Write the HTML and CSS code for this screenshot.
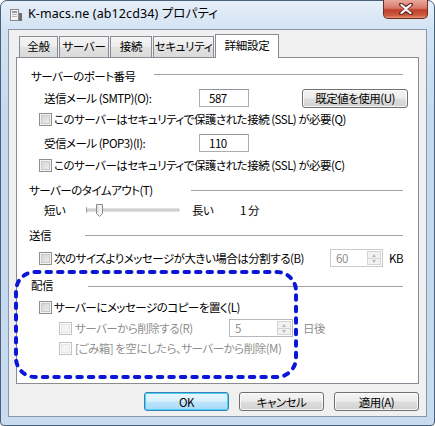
FILE: index.html
```html
<!DOCTYPE html>
<html lang="ja">
<head>
<meta charset="utf-8">
<link rel="stylesheet" href="styles.css">
</head>
<body>
<div class="window">
  <div class="titlebar">
    <svg class="app-icon" width="13" height="14" viewBox="0 0 13 14">
      <rect x="0.5" y="1.5" width="8" height="11" fill="#f4f4f4" stroke="#8a8a8a"/>
      <rect x="2" y="3" width="5" height="2" fill="#9a9a9a"/>
      <rect x="2" y="6" width="5" height="1" fill="#b5b5b5"/>
      <rect x="2" y="8" width="5" height="1" fill="#b5b5b5"/>
      <rect x="9" y="5" width="3" height="8" fill="#6f6f6f"/>
    </svg>
    <span class="title">K-macs.ne (ab12cd34) プロパティ</span>
    <div class="close">
      <svg width="16" height="12" viewBox="0 0 16 12">
        <path d="M3 1.5 L8 5 L13 1.5 M3 10.5 L8 7 L13 10.5" fill="none" stroke="#6b2a24" stroke-width="4" stroke-linecap="round"/>
        <path d="M3.5 2 L8 5.5 L12.5 2 M3.5 10 L8 6.5 L12.5 10" fill="none" stroke="#ffffff" stroke-width="2.2" stroke-linecap="round"/>
      </svg>
    </div>
  </div>
  <div class="client">
    <div class="tabs">
      <div class="tab tab-general">全般</div>
      <div class="tab tab-server">サーバー</div>
      <div class="tab tab-conn">接続</div>
      <div class="tab tab-sec">セキュリティ</div>
      <div class="tab tab-active">詳細設定</div>
    </div>
    <div class="panel">
      <div class="group-head head-port"><span>サーバーのポート番号</span><i class="rule"></i></div>

      <div class="row row-field mt5">
        <span class="field-label">送信メール (SMTP)(O):</span>
        <span class="textbox">587</span>
        <span class="btn btn-default-val">既定値を使用(U)</span>
      </div>

      <div class="row row-check mt4">
        <span class="check"></span><span>このサーバーはセキュリティで保護された接続 (SSL) が必要(Q)</span>
      </div>

      <div class="row row-field mt7">
        <span class="field-label">受信メール (POP3)(I):</span>
        <span class="textbox">110</span>
      </div>

      <div class="row row-check mt5">
        <span class="check"></span><span>このサーバーはセキュリティで保護された接続 (SSL) が必要(C)</span>
      </div>

      <div class="group-head head-timeout mt9"><span>サーバーのタイムアウト(T)</span><i class="rule"></i></div>

      <div class="row row-slider mt3">
        <span class="slider-short">短い</span>
        <svg class="slider" width="94" height="18" viewBox="0 0 94 18">
          <line x1="0.5" y1="6" x2="0.5" y2="12" stroke="#a8a8a8"/>
          <rect x="1" y="8" width="92" height="2" fill="#e4e4e4" stroke="#b2b2b2" stroke-width="0.8"/>
          <path d="M10.5 3.5 h6 v9 l-3 3 l-3 -3 z" fill="#f4f4f4" stroke="#8a8a8a"/>
          <line x1="12" y1="5" x2="12" y2="12" stroke="#d0d0d0"/>
        </svg>
        <span class="slider-long">長い</span>
        <span>1 分</span>
      </div>

      <div class="group-head head-send mt8"><span>送信</span><i class="rule"></i></div>

      <div class="row row-field mt6">
        <span class="check"></span><span class="split-label">次のサイズよりメッセージが大きい場合は分割する(B)</span>
        <span class="spin spin-split"><span class="spin-val">60</span><span class="spin-btns"><i class="up"></i><i class="down"></i></span></span>
        <span class="unit">KB</span>
      </div>

      <div class="group-head head-deliver mt10"><span>配信</span><i class="rule"></i></div>

      <div class="row row-check mt6">
        <span class="check"></span><span>サーバーにメッセージのコピーを置く(L)</span>
      </div>

      <div class="row row-field sub mt4 disabled-text">
        <span class="check check-disabled"></span><span class="delete-label">サーバーから削除する(R)</span>
        <span class="spin spin-days"><span class="spin-val">5</span><span class="spin-btns"><i class="up"></i><i class="down"></i></span></span>
        <span class="unit-days">日後</span>
      </div>

      <div class="row row-check sub mt3 disabled-text">
        <span class="check check-disabled"></span><span>[ごみ箱] を空にしたら、サーバーから削除(M)</span>
      </div>

      <svg class="annotation" width="286" height="112" viewBox="0 0 286 112">
        <rect x="3" y="3" width="280" height="105" rx="19" ry="19" fill="none" stroke="#0b16d6" stroke-width="4" stroke-dasharray="4.5 7" stroke-linecap="round"/>
      </svg>
    </div>
    <div class="buttons">
      <span class="btn btn-ok">OK</span>
      <span class="btn">キャンセル</span>
      <span class="btn">適用(A)</span>
    </div>
  </div>
</div>
</body>
</html>
```

FILE: styles.css
```css
html, body {
  margin: 0;
  padding: 0;
  background: #ffffff;
}

body {
  width: 435px;
  height: 426px;
  overflow: hidden;
  font-family: "Noto Sans CJK JP", "Noto Sans", sans-serif;
  font-size: 11.5px;
  letter-spacing: -0.5px;
  line-height: 16px;
  color: #000;
  font-feature-settings: "palt";
  white-space: nowrap;
}

.window {
  box-sizing: border-box;
  width: 435px;
  height: 426px;
  border: 1px solid #4a5f78;
  border-radius: 7px 7px 4px 4px;
  background: linear-gradient(180deg, #e6eff9 0px, #d3e3f3 28px, #c4d8ee 120px, #c8dbef 100%);
  padding: 0 7px 8px 7px;
  display: flex;
  flex-direction: column;
}

.titlebar {
  height: 28px;
  display: flex;
  align-items: flex-start;
  flex-shrink: 0;
}

.app-icon {
  margin: 7px 0 0 2px;
}

.title {
  margin: 5px 0 0 5px;
  font-family: "Noto Sans", "Noto Sans CJK JP", sans-serif;
  font-size: 12.5px;
  letter-spacing: 0.1px;
  color: #000;
}

.close {
  margin-left: auto;
  margin-right: -1px;
  margin-top: -1px;
  width: 45px;
  height: 19px;
  box-sizing: border-box;
  border: 1px solid #6e2b22;
  border-top: none;
  border-radius: 0 0 5px 5px;
  background: linear-gradient(180deg, #e9a99c 0%, #d7796a 45%, #c23f2b 55%, #cc5a3e 85%, #e59a73 100%);
  display: flex;
  align-items: center;
  justify-content: center;
}

.client {
  flex: 1;
  border: 1px solid #8498b0;
  background: #f0f0f0;
  padding: 0 7px;
  display: flex;
  flex-direction: column;
}

.tabs {
  display: flex;
  align-items: flex-end;
  height: 27px;
  margin-left: 3px;
  position: relative;
  z-index: 1;
}

.tab {
  box-sizing: border-box;
  height: 21px;
  margin-right: 1px;
  border: 1px solid #898c95;
  border-bottom: none;
  background: linear-gradient(180deg, #f5f5f5 0%, #ececec 50%, #e2e2e2 51%, #dadada 100%);
  line-height: 19px;
  font-size: 11.5px;
  letter-spacing: -0.3px;
  text-align: center;
}

.tab-general { width: 39px; }
.tab-server { width: 50px; }
.tab-conn { width: 42px; }
.tab-sec { width: 61px; }

.tab-active {
  width: 64px;
  height: 24px;
  margin-bottom: -1px;
  background: #ffffff;
  line-height: 21px;
}

.panel {
  position: relative;
  height: 327px;
  box-sizing: border-box;
  border: 1px solid #898c95;
  background: #ffffff;
  padding: 10px 10px 0 14px;
  display: flex;
  flex-direction: column;
}

.group-head {
  display: flex;
  align-items: center;
  height: 16px;
}

.rule {
  flex: 1;
  height: 0;
  border-top: 1px solid #a0a0a0;
  margin-right: 5px;
}

.head-port .rule { margin-left: 18px; margin-top: -3px; }
.head-timeout { margin-left: -2px; }
.head-timeout .rule { margin-left: 38px; }
.head-send { margin-left: -2px; }
.head-send .rule { margin-left: 34px; }
.head-deliver .rule { margin-left: 35px; margin-top: 3px; }

.row {
  display: flex;
  align-items: center;
}

.row-field { height: 18px; padding-left: 8px; }
.row-check { height: 16px; padding-left: 8px; }
.row-slider { height: 18px; padding-left: 13px; }
.sub { padding-left: 28px; }

.mt3 { margin-top: 3px; }
.mt4 { margin-top: 4px; }
.mt5 { margin-top: 5px; }
.mt6 { margin-top: 6px; }
.mt7 { margin-top: 7px; }
.mt8 { margin-top: 8px; }
.mt9 { margin-top: 9px; }
.mt10 { margin-top: 10px; }

.field-label {
  width: 155px;
  margin-left: 5px;
}

.textbox {
  box-sizing: border-box;
  width: 50px;
  height: 18px;
  border: 1px solid #abadb3;
  border-top-color: #8f939b;
  background: #fff;
  padding-left: 9px;
  line-height: 16px;
}

.btn {
  box-sizing: border-box;
  height: 19px;
  border: 1px solid #707070;
  border-radius: 3px;
  background: linear-gradient(180deg, #f4f4f4 0%, #ececec 48%, #dedede 52%, #d1d1d1 100%);
  box-shadow: inset 0 0 0 1px rgba(255,255,255,0.75);
  display: inline-flex;
  align-items: center;
  justify-content: center;
  line-height: 16px;
}

.btn-default-val {
  margin-left: auto;
  width: 106px;
}

.check {
  box-sizing: border-box;
  width: 13px;
  height: 13px;
  border: 1px solid #8e8f8f;
  background: linear-gradient(135deg, #cfcfcf 0%, #f2f2f2 100%);
  box-shadow: inset 0 0 0 1px #f4f4f4, inset 0 0 0 2px #c9c9c9;
  margin-right: 2px;
  flex-shrink: 0;
}

.check-disabled {
  border-color: #c2c2c2;
  background: #f4f4f4;
  box-shadow: inset 0 0 0 1px #fbfbfb, inset 0 0 0 2px #e6e6e6;
  margin-right: 3px;
}

.disabled-text { color: #8f8f8f; }

.slider-short { width: 42px; }
.slider { margin-right: 12px; flex-shrink: 0; }
.slider-long { width: 48px; }

.split-label { width: 276px; }

.spin {
  box-sizing: border-box;
  display: flex;
  height: 18px;
  border: 1px solid #b5b8bf;
  background: #fff;
  flex-shrink: 0;
}

.spin-split { width: 53px; color: #8f8f8f; border-color: #c8cacf; }
.spin-days { width: 64px; }

.spin-val {
  flex: 1;
  padding-left: 5px;
  line-height: 16px;
}

.spin-btns {
  width: 14px;
  display: flex;
  flex-direction: column;
  margin: 1px 1px 1px 0;
}

.spin-btns i {
  flex: 1;
  position: relative;
  border: 1px solid #d4d4d4;
  background: #f2f2f2;
}

.spin-btns i.down { border-top: none; }

.spin-btns i::after {
  content: "";
  position: absolute;
  left: 4px;
  top: 2px;
  border-left: 2.5px solid transparent;
  border-right: 2.5px solid transparent;
}

.spin-btns i.up::after { border-bottom: 3px solid #b8b8b8; }
.spin-btns i.down::after { border-top: 3px solid #b8b8b8; top: 1px; }

.unit { margin-left: 6px; }

.delete-label { width: 154px; }
.unit-days { margin-left: 10px; }

.annotation {
  position: absolute;
  left: -4px;
  top: 211px;
  overflow: visible;
}

.buttons {
  display: flex;
  justify-content: flex-end;
  gap: 10px;
  margin-top: 8px;
}

.buttons .btn {
  width: 85px;
}

.btn-ok {
  border-color: #3c7fb1;
  background: linear-gradient(180deg, #eaf6fd 0%, #d9f0fc 48%, #bee6fd 52%, #a7d9f5 100%);
  box-shadow: inset 0 0 0 1px #48d3fe;
}
```
